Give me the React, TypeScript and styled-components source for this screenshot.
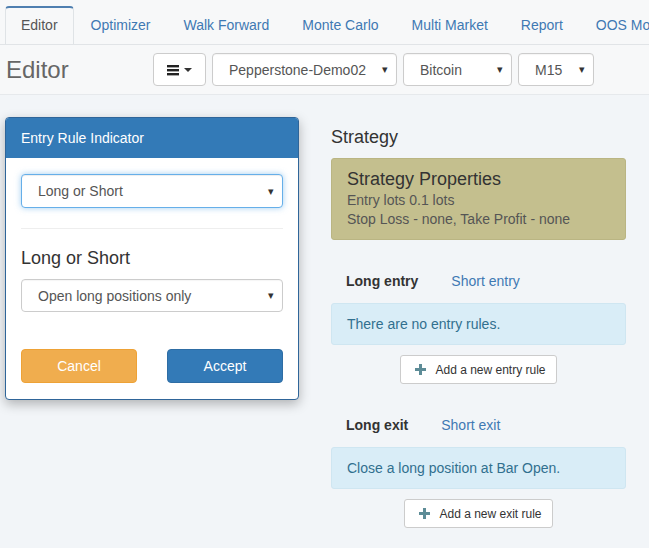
import React from 'react';
import styled, { createGlobalStyle } from 'styled-components';

const GlobalStyle = createGlobalStyle`
  html, body {
    margin: 0;
    padding: 0;
    background: #f2f5f8;
    font-family: "Liberation Sans", Arial, sans-serif;
    font-size: 14px;
    color: #333;
    overflow: hidden;
  }
`;

const Page = styled.div`
  width: 649px;
  height: 548px;
  overflow: hidden;
  background: #f2f5f8;
`;

const TabBar = styled.div`
  display: flex;
  align-items: flex-end;
  height: 45px;
  padding-left: 5px;
  box-sizing: border-box;
  background: #f7f8f9;
  border-bottom: 1px solid #e1e4e7;
  white-space: nowrap;
  overflow: hidden;
`;

const Tab = styled.div<{ $active?: boolean }>`
  height: 39px;
  box-sizing: border-box;
  display: flex;
  align-items: center;
  padding: 0 15px 3px;
  margin-right: 1px;
  margin-bottom: -1px;
  color: ${p => (p.$active ? '#555' : '#3f79b3')};
  background: ${p => (p.$active ? '#f7f8f9' : 'transparent')};
  border: 1px solid ${p => (p.$active ? '#dfe3e6' : 'transparent')};
  border-top: 2px solid ${p => (p.$active ? '#4f7fb0' : 'transparent')};
  border-bottom-color: ${p => (p.$active ? '#f7f8f9' : 'transparent')};
  border-radius: 4px 4px 0 0;
`;

const Toolbar = styled.div`
  display: flex;
  align-items: center;
  height: 50px;
  box-sizing: border-box;
  padding-left: 6px;
  background: #f7f8f9;
  border-bottom: 1px solid #e6e9ec;
`;

const Title = styled.h1`
  margin: 0;
  width: 147px;
  font-size: 24px;
  font-weight: normal;
  color: #666;
`;

const Controls = styled.div`
  display: flex;
  gap: 6px;
`;

const MenuButton = styled.div`
  width: 53px;
  height: 33px;
  box-sizing: border-box;
  display: flex;
  align-items: center;
  justify-content: center;
  gap: 5px;
  background: #fff;
  border: 1px solid #ccc;
  border-radius: 4px;
`;

const Caret = styled.span`
  width: 0;
  height: 0;
  border-left: 4px solid transparent;
  border-right: 4px solid transparent;
  border-top: 4px solid #333;
`;

const Select = styled.div<{ $w?: number; $focus?: boolean }>`
  width: ${p => (p.$w ? `${p.$w}px` : '100%')};
  height: ${p => (p.$focus ? 34 : 33)}px;
  box-sizing: border-box;
  display: flex;
  align-items: center;
  justify-content: space-between;
  padding: 0 8px 0 16px;
  background: #fff;
  color: #555;
  border: 1px solid ${p => (p.$focus ? '#66afe9' : '#ccc')};
  border-radius: 4px;
  box-shadow: ${p =>
    p.$focus
      ? 'inset 0 1px 1px rgba(0,0,0,.075), 0 0 6px rgba(102,175,233,.6)'
      : 'inset 0 1px 1px rgba(0,0,0,.04)'};
  white-space: nowrap;
  &::after {
    content: '▾';
    font-size: 11px;
    color: #333;
  }
`;

const Main = styled.div`
  display: flex;
  padding: 22px 0 0 5px;
  gap: 32px;
`;

const Panel = styled.div`
  width: 294px;
  box-sizing: border-box;
  background: #fff;
  border: 1px solid #2f6599;
  border-radius: 4px;
  box-shadow: 0 4px 12px rgba(0, 0, 0, 0.28);
  overflow: hidden;
  align-self: flex-start;
`;

const PanelHeader = styled.div`
  height: 40px;
  display: flex;
  align-items: center;
  padding: 0 15px;
  background: #337ab7;
  color: #fff;
  font-size: 14px;
`;

const PanelBody = styled.div`
  padding: 16px 15px 16px;
`;

const Divider = styled.hr`
  border: 0;
  border-top: 1px solid #eee;
  margin: 20px 0 19px;
`;

const FieldLabel = styled.h4`
  margin: 0 0 11px;
  font-size: 18px;
  font-weight: normal;
  line-height: 20px;
  color: #333;
`;

const ButtonRow = styled.div`
  display: grid;
  grid-template-columns: 1fr 1fr;
  gap: 30px;
  margin-top: 37px;
`;

const ActionButton = styled.div<{ $kind: 'warn' | 'primary' }>`
  height: 34px;
  display: flex;
  align-items: center;
  justify-content: center;
  color: #fff;
  font-size: 14px;
  border-radius: 4px;
  background: ${p => (p.$kind === 'warn' ? '#f0ad4e' : '#337ab7')};
  border: 1px solid ${p => (p.$kind === 'warn' ? '#eea236' : '#2e6da4')};
  box-sizing: border-box;
`;

const Strategy = styled.div`
  width: 295px;
`;

const SectionTitle = styled.h3`
  margin: 10px 0 11px;
  font-size: 18px;
  font-weight: normal;
  line-height: 20px;
  color: #333;
`;

const PropsBox = styled.div`
  background: #c4bf8e;
  border: 1px solid #bab583;
  border-radius: 3px;
  padding: 9px 15px 10px;
  h4 {
    margin: 0 0 1px;
    font-size: 18px;
    font-weight: normal;
    line-height: 22px;
    color: #333;
  }
  div {
    line-height: 19px;
    color: #555;
  }
`;

const SubTabs = styled.div`
  display: flex;
  gap: 33px;
  height: 40px;
  align-items: center;
  padding-left: 15px;
  margin-top: 21px;
  margin-bottom: 2px;
`;

const SubTab = styled.span<{ $active?: boolean }>`
  font-weight: ${p => (p.$active ? 'bold' : 'normal')};
  color: ${p => (p.$active ? '#333' : '#3f79b3')};
`;

const InfoBox = styled.div`
  height: 42px;
  box-sizing: border-box;
  display: flex;
  align-items: center;
  padding: 0 15px;
  background: #d9edf7;
  border: 1px solid #cfe6f1;
  border-radius: 3px;
  color: #31708f;
`;

const AddRow = styled.div`
  display: flex;
  justify-content: center;
  margin-top: 10px;
`;

const AddButton = styled.div`
  height: 29px;
  box-sizing: border-box;
  display: flex;
  align-items: center;
  gap: 9px;
  padding: 0 10px 0 14px;
  background: #fff;
  border: 1px solid #ccc;
  border-radius: 3px;
  font-size: 12px;
  color: #333;
`;

const Hamburger = () => (
  <svg width="12" height="12" viewBox="0 0 12 12">
    <rect x="0" y="1" width="12" height="2.4" fill="#222" />
    <rect x="0" y="5" width="12" height="2.4" fill="#222" />
    <rect x="0" y="9" width="12" height="2.4" fill="#222" />
  </svg>
);

const Plus = () => (
  <svg width="11" height="11" viewBox="0 0 11 11">
    <rect x="4" y="0" width="3" height="11" fill="#5d8c97" />
    <rect x="0" y="4" width="11" height="3" fill="#5d8c97" />
  </svg>
);

const tabs = ['Editor', 'Optimizer', 'Walk Forward', 'Monte Carlo', 'Multi Market', 'Report', 'OOS Monitor'];

export default function App() {
  return (
    <Page>
      <GlobalStyle />
      <TabBar>
        {tabs.map(t => (
          <Tab key={t} $active={t === 'Editor'}>
            {t}
          </Tab>
        ))}
      </TabBar>
      <Toolbar>
        <Title>Editor</Title>
        <Controls>
          <MenuButton>
            <Hamburger />
            <Caret />
          </MenuButton>
          <Select $w={185}>Pepperstone-Demo02</Select>
          <Select $w={109}>Bitcoin</Select>
          <Select $w={76}>M15</Select>
        </Controls>
      </Toolbar>
      <Main>
        <Panel>
          <PanelHeader>Entry Rule Indicator</PanelHeader>
          <PanelBody>
            <Select $focus>Long or Short</Select>
            <Divider />
            <FieldLabel>Long or Short</FieldLabel>
            <Select>Open long positions only</Select>
            <ButtonRow>
              <ActionButton $kind="warn">Cancel</ActionButton>
              <ActionButton $kind="primary">Accept</ActionButton>
            </ButtonRow>
          </PanelBody>
        </Panel>
        <Strategy>
          <SectionTitle>Strategy</SectionTitle>
          <PropsBox>
            <h4>Strategy Properties</h4>
            <div>Entry lots 0.1 lots</div>
            <div>Stop Loss - none, Take Profit - none</div>
          </PropsBox>
          <SubTabs>
            <SubTab $active>Long entry</SubTab>
            <SubTab>Short entry</SubTab>
          </SubTabs>
          <InfoBox>There are no entry rules.</InfoBox>
          <AddRow>
            <AddButton>
              <Plus />
              Add a new entry rule
            </AddButton>
          </AddRow>
          <SubTabs>
            <SubTab $active>Long exit</SubTab>
            <SubTab>Short exit</SubTab>
          </SubTabs>
          <InfoBox>Close a long position at Bar Open.</InfoBox>
          <AddRow>
            <AddButton>
              <Plus />
              Add a new exit rule
            </AddButton>
          </AddRow>
        </Strategy>
      </Main>
    </Page>
  );
}
